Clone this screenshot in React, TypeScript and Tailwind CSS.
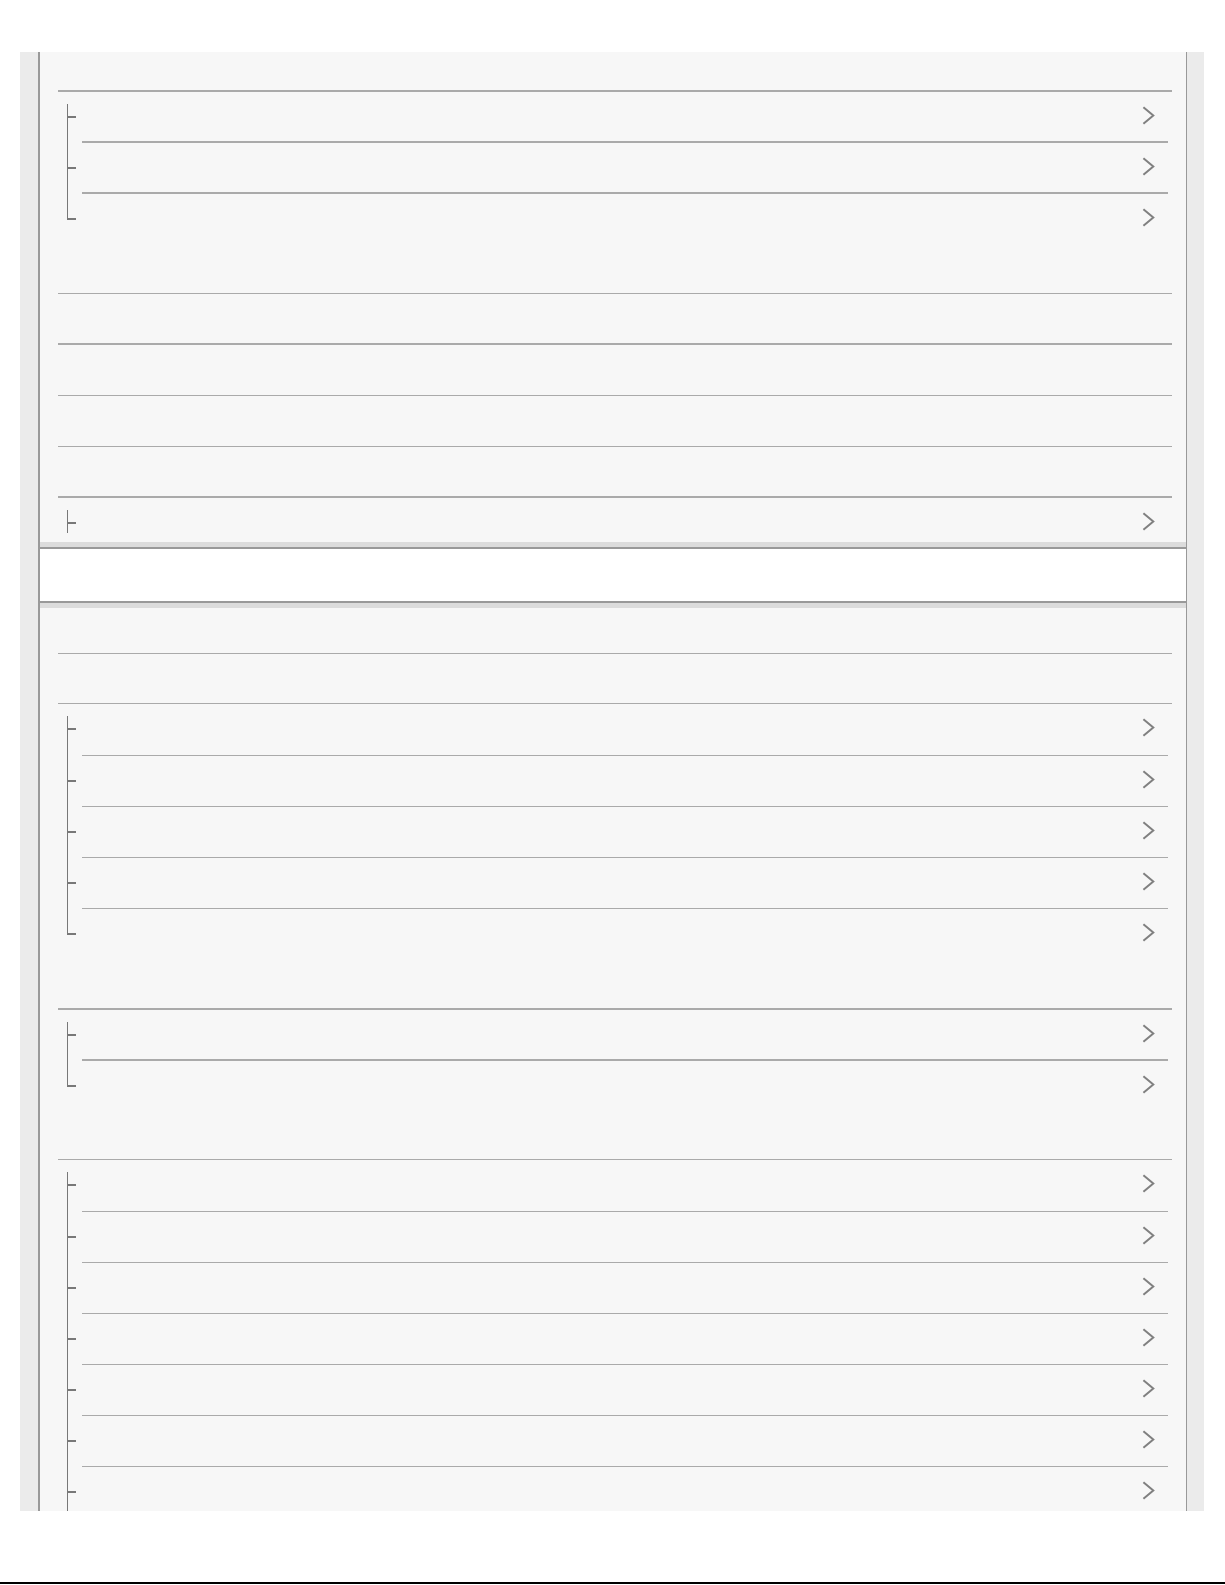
import React from "react";

type Kind = "first" | "mid" | "last" | "single";

const Chev = () => (
  <svg width="13" height="19" viewBox="0 0 13 19" fill="none" className="block">
    <path d="M1.4 1.2 L11.3 9.5 L1.4 17.8" stroke="#808080" strokeWidth="2" strokeLinejoin="miter" />
  </svg>
);

const TopSep = ({ t }: { t: 1 | 2 }) => (
  <div className={t === 2 ? "ml-[18px] mr-[14px] h-[2px] bg-[#aaaaaa]" : "ml-[18px] mr-[14px] h-px bg-[#aaaaaa]"} />
);

const Space = ({ h }: { h: string }) => <div className={h} />;

const rowH: Record<number, string> = {
  44: "h-[44px]",
  49: "h-[49px]",
  50: "h-[50px]",
  51: "h-[51px]",
};

const topSeg: Record<number, string> = {
  0: "h-[24px]",
  1: "h-[25px]",
  2: "h-[26px]",
};

const bordT: Record<number, string> = {
  0: "border-t-0",
  1: "border-t",
  2: "border-t-2",
};

function Row({ kind, b, total }: { kind: Kind; b: 0 | 1 | 2; total: number }) {
  const isFirst = kind === "first" || kind === "single";
  return (
    <div className={`flex ${rowH[total]}`}>
      <div className="w-[42px] shrink-0 flex flex-col pl-[27px]">
        {isFirst ? (
          <>
            <div className="h-[12px] shrink-0" />
            <div className="h-[12px] shrink-0 border-l border-[#787878]" />
          </>
        ) : (
          <div className={`${topSeg[b]} shrink-0 border-l border-[#787878]`} />
        )}
        <div className="w-[9px] h-[2px] shrink-0 bg-[#787878]" />
        {kind === "last" ? null : kind === "single" ? (
          <div className="h-[9px] shrink-0 border-l border-[#787878]" />
        ) : (
          <div className="flex-1 border-l border-[#787878]" />
        )}
      </div>
      <div className={`flex-1 mr-[18px] ${bordT[b]} border-[#aaaaaa] flex items-start justify-end pt-[14px] pr-[13px]`}>
        <Chev />
      </div>
    </div>
  );
}

export default function App() {
  return (
    <div className="w-[1225px] h-[1585px] bg-white">
      <div className="h-[52px]" />
      <div className="ml-[20px] w-[1184px] h-[1459px] overflow-hidden bg-[#ebebeb] pl-[18px] pr-[17px]">
        <div className="border-l-2 border-r border-[#999999] h-full">
          {/* Panel 1 */}
          <div className="bg-[#f7f7f7]">
            <Space h="h-[38px]" />
            <TopSep t={2} />
            <Row kind="first" b={0} total={49} />
            <Row kind="mid" b={2} total={51} />
            <Row kind="last" b={2} total={51} />
            <Space h="h-[50px]" />
            <TopSep t={1} />
            <Space h="h-[49px]" />
            <TopSep t={2} />
            <Space h="h-[50px]" />
            <TopSep t={1} />
            <Space h="h-[50px]" />
            <TopSep t={1} />
            <Space h="h-[49px]" />
            <TopSep t={2} />
            <Row kind="single" b={0} total={44} />
            <div className="h-[5px] bg-[#dcdcdc]" />
          </div>
          <div className="h-[2px] bg-[#999999]" />
          {/* White section */}
          <div className="h-[52px] bg-white" />
          <div className="h-[2px] bg-[#999999]" />
          {/* Panel 2 */}
          <div className="bg-[#f7f7f7]">
            <div className="h-[5px] bg-[#dcdcdc]" />
            <Space h="h-[45px]" />
            <TopSep t={1} />
            <Space h="h-[49px]" />
            <TopSep t={1} />
            <Row kind="first" b={0} total={51} />
            <Row kind="mid" b={1} total={51} />
            <Row kind="mid" b={1} total={51} />
            <Row kind="mid" b={1} total={51} />
            <Row kind="last" b={1} total={51} />
            <Space h="h-[49px]" />
            <TopSep t={2} />
            <Row kind="first" b={0} total={49} />
            <Row kind="last" b={2} total={51} />
            <Space h="h-[49px]" />
            <TopSep t={1} />
            <Row kind="first" b={0} total={51} />
            <Row kind="mid" b={1} total={51} />
            <Row kind="mid" b={1} total={51} />
            <Row kind="mid" b={1} total={51} />
            <Row kind="mid" b={1} total={51} />
            <Row kind="mid" b={1} total={51} />
            <Row kind="mid" b={1} total={51} />
            <Row kind="mid" b={1} total={51} />
          </div>
        </div>
      </div>
      <div className="h-[71px]" />
      <div className="h-[2px] bg-black" />
      <div className="h-px" />
    </div>
  );
}
